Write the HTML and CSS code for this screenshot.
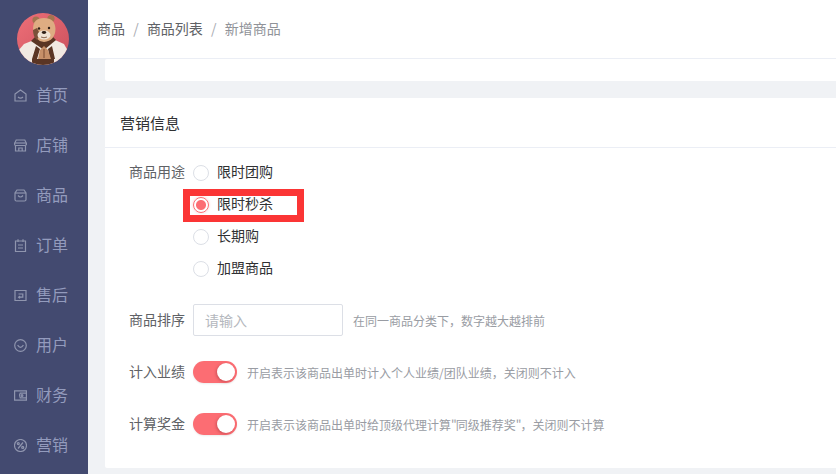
FILE: index.html
```html
<!DOCTYPE html>
<html lang="zh-CN">
<head>
    <meta charset="UTF-8">
    <meta name="viewport" content="width=device-width, initial-scale=1.0">
    <title>新增商品</title>
    <link rel="stylesheet" href="styles.css">
</head>
<body>
    <aside class="sidebar">
        <div class="avatar">
            <svg width="52" height="52" viewBox="0 0 52 52">
                <defs>
                    <clipPath id="avatarClip"><circle cx="26" cy="26" r="26"/></clipPath>
                    <linearGradient id="avatarBg" x1="0" y1="0" x2="1" y2="1">
                        <stop offset="0" stop-color="#ee6f78"/>
                        <stop offset="1" stop-color="#c9505c"/>
                    </linearGradient>
                </defs>
                <g clip-path="url(#avatarClip)">
                    <rect width="52" height="52" fill="url(#avatarBg)"/>
                    <path d="M1 38 L7 31 L17 27 L38 27 L47 31 L51 38 L50 52 L2 52 Z" fill="#f1e9e2"/>
                    <path d="M15 46 H37 V52 H15 Z" fill="#5a3524"/>
                    <path d="M14 28 L27 37 L39 27 L36 24 L18 24 Z" fill="#5a3524"/>
                    <path d="M19 33 L15 46 H20 L23 36 Z M35 33 L38 46 H33 L31 36 Z" fill="#5a3524"/>
                    <path d="M21 46 L23 37 L27 33 L31 37 L34 46 Z" fill="#c79069"/>
                    <path d="M27 36 V45" stroke="#7b4b33" stroke-width="1" fill="none"/>
                    <circle cx="19" cy="7" r="3.6" fill="#a3744f"/>
                    <circle cx="34" cy="5.5" r="3.6" fill="#a3744f"/>
                    <path d="M16 16 Q16 5 27 5 Q38 5 38.5 16 Q38 28 27 29 Q17 28 16 16 Z" fill="#deac82"/>
                    <path d="M16 17 Q16 24 20 27 L23 21 L20 15 Z" fill="#7a5038"/>
                    <ellipse cx="27" cy="22" rx="6.5" ry="4.6" fill="#efe2d4"/>
                    <circle cx="22" cy="15.5" r="1.2" fill="#2f1f17"/>
                    <circle cx="32" cy="15" r="1.2" fill="#2f1f17"/>
                    <ellipse cx="27" cy="19.5" rx="2.2" ry="1.4" fill="#2f1f17"/>
                    <path d="M24 24 Q27 25.5 30 24" stroke="#6e4630" stroke-width=".8" fill="none"/>
                </g>
            </svg>
        </div>
        <nav class="nav">
            <a class="nav-item">
                <svg class="nav-icon" viewBox="0 0 13 13"><path d="M1 5 L6.5 1 L12 5 V12 H1 Z"/><path d="M4 8 Q6.5 10.3 9 8"/></svg>
                <span class="nav-text">首页</span>
            </a>
            <a class="nav-item">
                <svg class="nav-icon" viewBox="0 0 13 13"><path d="M2.2 1 H10.8 L12.5 4.5 Q12.5 6.5 11 6.5 H2 Q.5 6.5 .5 4.5 Z"/><path d="M.7 4 H12.3"/><path d="M1.5 6.5 V12 H11.5 V6.5"/><path d="M4.8 12 V9 H8.2 V12"/></svg>
                <span class="nav-text">店铺</span>
            </a>
            <a class="nav-item">
                <svg class="nav-icon" viewBox="0 0 13 13"><path d="M3 1 H10 L12 4 V10.5 Q12 12 10.5 12 H2.5 Q1 12 1 10.5 V4 Z"/><path d="M1 4 H12"/><path d="M4 6.5 Q6.5 9.5 9 6.5"/></svg>
                <span class="nav-text">商品</span>
            </a>
            <a class="nav-item">
                <svg class="nav-icon" viewBox="0 0 13 13"><path d="M1.5 2 H11.5 V12.5 H1.5 Z"/><path d="M4 .2 V3 M9 .2 V3"/><path d="M4 6 H9 M4 9 H9"/></svg>
                <span class="nav-text">订单</span>
            </a>
            <a class="nav-item">
                <svg class="nav-icon" viewBox="0 0 13 13"><path d="M1 1.5 H12 V11.5 H1 Z"/><path d="M4.5 5 H8.8 V8.2 H4.8 M6 7 L4.6 8.2 L6 9.4"/></svg>
                <span class="nav-text">售后</span>
            </a>
            <a class="nav-item">
                <svg class="nav-icon" viewBox="0 0 13 13"><circle cx="6.5" cy="6.5" r="5.8"/><path d="M3.6 6.2 Q6.5 10.4 9.4 6.2"/></svg>
                <span class="nav-text">用户</span>
            </a>
            <a class="nav-item">
                <svg class="nav-icon" viewBox="0 0 13 13"><path d="M.6 1.8 H12.4 V11.2 H.6 Z"/><path d="M12.4 4.2 H6.2 Q4.6 6.5 6.2 8.8 H12.4"/><circle cx="8" cy="6.5" r=".9"/></svg>
                <span class="nav-text">财务</span>
            </a>
            <a class="nav-item">
                <svg class="nav-icon" viewBox="0 0 13 13"><circle cx="6.5" cy="6.5" r="6"/><path d="M4 9.5 L9 3.5"/><circle cx="4.3" cy="4.6" r="1"/><circle cx="8.7" cy="8.4" r="1"/></svg>
                <span class="nav-text">营销</span>
            </a>
        </nav>
    </aside>

    <div class="main">
        <header class="topbar">
            <span class="crumb">商品</span>
            <span class="crumb-sep">/</span>
            <span class="crumb">商品列表</span>
            <span class="crumb-sep">/</span>
            <span class="crumb crumb-current">新增商品</span>
        </header>

        <div class="content">
            <div class="card card-top"></div>

            <section class="card">
                <h2 class="card-title">营销信息</h2>
                <div class="form">
                    <div class="form-row form-row-radio">
                        <label class="form-label">商品用途</label>
                        <div class="radio-group">
                            <label class="radio"><span class="radio-dot"></span><span class="radio-text">限时团购</span></label>
                            <label class="radio radio-checked"><span class="radio-dot"></span><span class="radio-text">限时秒杀</span><span class="highlight"></span></label>
                            <label class="radio"><span class="radio-dot"></span><span class="radio-text">长期购</span></label>
                            <label class="radio"><span class="radio-dot"></span><span class="radio-text">加盟商品</span></label>
                        </div>
                    </div>
                    <div class="form-row form-row-input">
                        <label class="form-label">商品排序</label>
                        <input class="text-input" type="text" placeholder="请输入">
                        <span class="hint">在同一商品分类下，数字越大越排前</span>
                    </div>
                    <div class="form-row form-row-switch">
                        <label class="form-label">计入业绩</label>
                        <span class="switch"><span class="switch-knob"></span></span>
                        <span class="hint">开启表示该商品出单时计入个人业绩/团队业绩，关闭则不计入</span>
                    </div>
                    <div class="form-row form-row-switch">
                        <label class="form-label">计算奖金</label>
                        <span class="switch"><span class="switch-knob"></span></span>
                        <span class="hint">开启表示该商品出单时给顶级代理计算<span class="quote">"</span>同级推荐奖<span class="quote">"</span>，关闭则不计算</span>
                    </div>
                </div>
            </section>
        </div>
    </div>
</body>
</html>
```

FILE: styles.css
```css
* {
    margin: 0;
    padding: 0;
    box-sizing: border-box;
}

html, body {
    height: 100%;
    overflow: hidden;
}

body {
    display: flex;
    font-family: "Noto Sans CJK SC", "Liberation Sans", sans-serif;
    background-color: #f0f2f5;
    color: #303133;
}

.sidebar {
    width: 88px;
    flex-shrink: 0;
    background-color: #434a70;
    padding-top: 13px;
}

.avatar {
    display: flex;
    justify-content: center;
    margin-left: -2px;
    height: 52px;
}

.nav {
    margin-top: 5px;
}

.nav-item {
    display: flex;
    align-items: center;
    height: 50px;
    padding-left: 14px;
    gap: 9px;
    font-size: 16px;
    color: #939bbd;
}

.nav-text {
    padding-bottom: 2px;
}

.nav-icon {
    width: 13px;
    height: 13px;
    fill: none;
    stroke: #8f95ae;
    stroke-width: 1.2;
}

.main {
    flex: 1;
    min-width: 0;
}

.topbar {
    display: flex;
    align-items: center;
    height: 59px;
    padding: 0 0 2px 9px;
    background-color: #fff;
    border-bottom: 1px solid #ebeef5;
    font-size: 14px;
    color: #606266;
}

.crumb-sep {
    margin: 0 8.2px;
    color: #a8abb2;
}

.crumb-current {
    color: #909399;
}

.content {
    padding-left: 17px;
}

.card {
    background-color: #fff;
    border-radius: 2px 0 0 2px;
    margin-bottom: 17px;
    height: 370px;
}

.card-top {
    height: 22px;
}

.card-title {
    height: 50px;
    line-height: 50px;
    padding-left: 15px;
    border-bottom: 1px solid #ebeef5;
    font-size: 15px;
    font-weight: 400;
    color: #303133;
}

.form {
    padding-top: 8px;
}

.form-row {
    display: flex;
    align-items: center;
}

.form-row-radio {
    align-items: flex-start;
}

.form-row-input {
    margin-top: 20px;
}

.form-row-switch {
    height: 22px;
    margin-top: 25px;
}

.form-row-switch + .form-row-switch {
    margin-top: 30px;
}

.form-label {
    width: 80px;
    height: 32px;
    text-align: right;
    font-size: 14px;
    line-height: 30px;
    color: #606266;
    margin-right: 8px;
}

.radio {
    position: relative;
    display: flex;
    align-items: center;
    height: 32px;
    font-size: 14px;
    color: #303133;
}

.radio-dot {
    width: 16px;
    height: 16px;
    margin-top: 2px;
    margin-right: 8px;
    border: 1px solid #dcdfe6;
    border-radius: 50%;
    background-color: #fff;
}

.radio-text {
    padding-bottom: 2px;
}

.radio-checked .radio-dot {
    border-color: #fc6d73;
    background: radial-gradient(circle, #fc6d73 0 4.5px, #fff 5.5px);
    box-shadow: 0 0 3px rgba(252, 109, 115, 0.35);
}

.highlight {
    position: absolute;
    left: -10px;
    top: 1px;
    width: 121px;
    height: 33px;
    border: 7px solid #fb3535;
    pointer-events: none;
}

.text-input {
    width: 150px;
    height: 32px;
    padding: 0 11px;
    border: 1px solid #dcdfe6;
    border-radius: 2px;
    font-family: inherit;
    font-size: 14px;
    outline: none;
}

.text-input::placeholder {
    color: #b4b7bd;
}

.hint {
    margin-left: 10px;
    font-size: 12px;
    color: #999ca3;
}

.quote {
    letter-spacing: -1px;
}

.switch {
    position: relative;
    flex-shrink: 0;
    width: 44px;
    height: 22px;
    border-radius: 11px;
    background-color: #fc6d73;
    box-shadow: 0 1px 2px rgba(0, 0, 0, 0.08);
}

.switch-knob {
    position: absolute;
    top: 2px;
    right: 2px;
    width: 18px;
    height: 18px;
    border-radius: 50%;
    background-color: #fff;
    box-shadow: -1px 1px 3px rgba(120, 30, 35, 0.35);
}
```
